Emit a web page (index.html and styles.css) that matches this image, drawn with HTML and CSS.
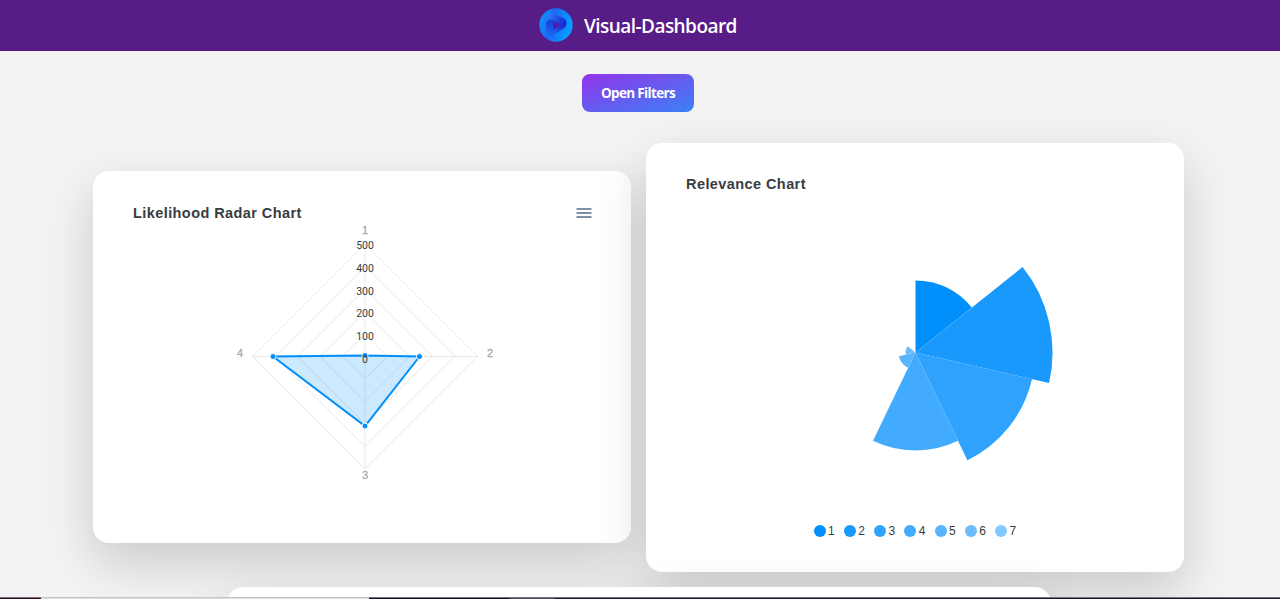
FILE: index.html
```html
<!DOCTYPE html>
<html lang="en">
<head>
<meta charset="utf-8">
<title>Visual-Dashboard</title>
<link rel="stylesheet" href="styles.css">
</head>
<body>
<div class="page">
  <header class="header">
    <svg class="logo" viewBox="0 0 34 34">
      <defs>
        <linearGradient id="ring" x1="0" y1="0" x2="1" y2="0.3"><stop offset="0" stop-color="#079fff"/><stop offset="0.45" stop-color="#1b6cf2"/><stop offset="1" stop-color="#049cff"/></linearGradient>
        <linearGradient id="top" x1="0" y1="0" x2="1" y2="0.5"><stop offset="0" stop-color="#2b8cff"/><stop offset="1" stop-color="#1926cf"/></linearGradient>
        <linearGradient id="stem" x1="0" y1="0" x2="0" y2="1"><stop offset="0" stop-color="#1a30d4"/><stop offset="1" stop-color="#1e72f8"/></linearGradient>
        <linearGradient id="low" x1="1" y1="0" x2="0" y2="1"><stop offset="0" stop-color="#1b22cc"/><stop offset="1" stop-color="#1d6ff5"/></linearGradient>
      </defs>
      <circle cx="17" cy="17" r="16.7" fill="url(#ring)"/>
      <path d="M7 13C7 8 11 7 15 8.5L24.5 12C28 14 27.5 18.5 24.5 20.5L16 26C14 28 15 30 19 31C12 32 7 27 7 21Z" fill="url(#stem)"/>
      <path d="M7 13C6 6 12 4 17 6.5L24.5 10C28.5 12.500 28.5 18 24.5 20.300L21.500 17L14.500 12.800C11 11 8.500 12 7 15Z" fill="url(#top)"/>
      <path d="M14 22.200L21.700 17L26.800 17C26.500 19 25.500 20.300 23.500 21.300L15 26.500C14 26.500 13.500 25 14 22.200Z" fill="url(#low)"/>
      <path d="M14 12.600L21.700 17.100L14 22.200Z" fill="#4c22ab"/>
    </svg>
    <h1 class="brand">Visual-Dashboard</h1>
  </header>
  <main class="main">
    <button class="filters">Open Filters</button>
    <div class="cards">
      <section class="card card-radar">
        <div class="card-head">
          <h2 class="card-title">Likelihood Radar Chart</h2>
          <svg class="menu" viewBox="0 0 16 12"><path d="M0.500 2H15.500M0.500 6H15.500M0.500 10H15.500" stroke="#7f90a3" stroke-width="1.800"/></svg>
        </div>
        <svg class="radar" viewBox="-135 -135.500 270 270">
          <g class="grid">
            <path d="M0-112.500L112.500 0L0 112.500L-112.500 0Z"/>
            <path d="M0-90L90 0L0 90L-90 0Z"/>
            <path d="M0-67.500L67.500 0L0 67.500L-67.500 0Z"/>
            <path d="M0-45L45 0L0 45L-45 0Z"/>
            <path d="M0-22.500L22.500 0L0 22.500L-22.500 0Z"/>
            <path d="M0-112.500V112.500M-112.500 0H112.500"/>
          </g>
          <path class="area" d="M0-1L54.500 0L0 69.500L-92 0Z"/>
          <g class="points">
            <circle cx="0" cy="-1" r="3"/><circle cx="54.500" cy="0" r="3"/><circle cx="0" cy="69.500" r="3"/><circle cx="-92" cy="0" r="3"/>
          </g>
          <g class="axis">
            <text x="0" y="-122.500">1</text><text x="125" y="0.500">2</text><text x="0" y="122.500">3</text><text x="-125" y="0.500">4</text>
          </g>
          <g class="ticks">
            <text x="0" y="-107.500">500</text><text x="0" y="-84.500">400</text><text x="0" y="-61.500">300</text><text x="0" y="-39.500">200</text><text x="0" y="-16.500">100</text><text x="0" y="6.500">0</text>
          </g>
        </svg>
      </section>
      <section class="card card-polar">
        <div class="card-head">
          <h2 class="card-title">Relevance Chart</h2>
        </div>
        <svg class="polar" viewBox="-139.500 -140.500 280 280">
          <path fill="#008ffb" d="M0 0V-72A72 72 0 0 1 56.300-44.900Z"/>
          <path fill="#1999fb" d="M0 0L107.100-85.400A137 137 0 0 1 133.600 30.500Z"/>
          <path fill="#2ea2fd" d="M0 0L116.500 26.600A119.500 119.500 0 0 1 51.900 107.700Z"/>
          <path fill="#42abfe" d="M0 0L42.500 88.300A98 98 0 0 1-42.500 88.300Z"/>
          <path fill="#57b4fd" d="M0 0L-7.400 15.300A17 17 0 0 1-16.600 3.800Z"/>
          <path fill="#6cbdfe" d="M0 0L-9.700 2.200A10 10 0 0 1-7.800-6.200Z"/>
        </svg>
        <ul class="legend">
          <li><i class="dot c1"></i>1</li>
          <li><i class="dot c2"></i>2</li>
          <li><i class="dot c3"></i>3</li>
          <li><i class="dot c4"></i>4</li>
          <li><i class="dot c5"></i>5</li>
          <li><i class="dot c6"></i>6</li>
          <li><i class="dot c7"></i>7</li>
        </ul>
      </section>
    </div>
    <section class="card card-next"></section>
  </main>
  <div class="strip"><span class="s1"></span><span class="s2"></span><span class="s3"></span><span class="s4"></span><span class="s5"></span></div>
</div>
</body>
</html>
```
FILE: styles.css
```css
* { box-sizing: border-box; }
body { margin: 0; background: #f3f3f3; overflow: hidden; }
.page { height: 599px; display: flex; flex-direction: column; font-family: "Liberation Sans", Arial, sans-serif; }
.header { height: 51px; flex: none; display: flex; justify-content: center; align-items: center; gap: 11px; padding: 0 5px 1px 0; background: #581c87; }
.logo { width: 34px; height: 34px; }
.brand { margin: 0; padding-top: 2px; font: 600 19px/28px "Open Sans", "Noto Sans", sans-serif; letter-spacing: -0.55px; color: #fff; white-space: nowrap; width: 152px; }
.main { flex: 1; min-height: 0; overflow: hidden; display: flex; flex-direction: column; align-items: center; padding-top: 23px; }
.filters { flex: none; width: 112px; height: 38px; margin: 0 4px 31px 0; padding: 0; border: 0; border-radius: 8px; background: linear-gradient(to bottom right, #9333ea, #3b82f6); color: #fff; font: 700 13.5px/20px "Open Sans", "Noto Sans", sans-serif; letter-spacing: -0.65px; }
.cards { flex: none; display: flex; align-items: flex-start; gap: 15px; margin-right: 3px; }
.card { background: #fff; border-radius: 16px; box-shadow: 0 20px 50px rgba(0, 0, 0, 0.17); }
.card-radar { width: 538px; height: 372px; margin-top: 28px; padding: 34px 39px 0 40px; }
.card-polar { width: 538px; height: 429px; padding: 33px 40px 0; }
.card-head { display: flex; justify-content: space-between; align-items: center; height: 16px; }
.card-title { margin: 0; font-size: 14.5px; line-height: 16px; font-weight: 700; letter-spacing: 0.42px; color: #373d3f; white-space: nowrap; }
.menu { width: 16px; height: 12px; }
.radar { display: block; width: 270px; height: 270px; margin: 0 0 0 97px; }
.grid path { fill: none; stroke: #e8e8e8; stroke-width: 1; }
.area { fill: rgba(0, 143, 251, 0.2); stroke: #008ffb; stroke-width: 2; }
.points circle { fill: #008ffb; stroke: #fff; stroke-width: 1; }
.axis text { font-size: 11px; fill: #a8a8a8; stroke: #a8a8a8; stroke-width: 0.3; text-anchor: middle; }
.ticks text { font-family: Roboto, "Liberation Sans", sans-serif; font-size: 10.5px; fill: #373d3f; text-anchor: middle; }
.polar { display: block; width: 280px; height: 280px; margin: 20px 0 0 90px; }
.legend { display: flex; gap: 9.2px; margin: 31px 0 0 127.5px; padding: 0; list-style: none; font-size: 12px; line-height: 16px; color: #373d3f; }
.legend li { display: flex; align-items: center; gap: 2.4px; }
.dot { width: 12px; height: 12px; border-radius: 50%; }
.c1 { background: #008ffb; }
.c2 { background: #1999fb; }
.c3 { background: #2ea2fd; }
.c4 { background: #42abfe; }
.c5 { background: #57b4fd; }
.c6 { background: #6cbdfe; }
.c7 { background: #83c8ff; }
.card-next { flex: none; width: 824px; height: 372px; margin: 15px 3px 0 0; }
.strip { flex: none; height: 2px; display: flex; }
.strip span { border-top: 1px solid #77707f; }
.s1 { width: 41px; background: #35061e; }
.strip .s2 { width: 328px; background: #ddd; border-color: #c4c4c4; }
.s3 { width: 141px; background: #100c2c; }
.s4 { width: 45px; background: #514c62; }
.s5 { flex: 1; background: #1a1430; }
```
